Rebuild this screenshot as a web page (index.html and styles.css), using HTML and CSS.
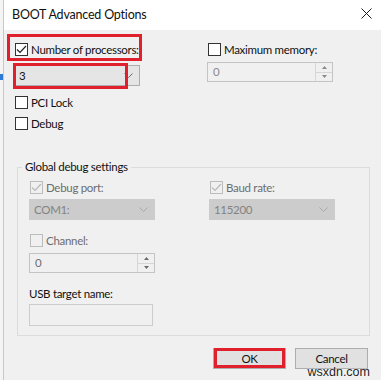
FILE: index.html
```html
<!DOCTYPE html>
<html lang="en">
<head>
    <meta charset="UTF-8">
    <meta name="viewport" content="width=device-width, initial-scale=1.0">
    <title>BOOT Advanced Options</title>
    <link rel="stylesheet" href="styles.css">
</head>
<body>
    <div class="backdrop"><span class="backdrop-icon"></span></div>

    <div class="dialog">
        <div class="titlebar">
            <span class="title">BOOT Advanced Options</span>
            <svg class="close" width="11" height="11" viewBox="0 0 11 11">
                <path d="M0.5 0.5 L10.5 10.5 M10.5 0.5 L0.5 10.5" stroke="#1a1a1a" stroke-width="1" fill="none"/>
            </svg>
        </div>

        <div class="content">
            <div class="top">
                <div class="col">
                    <label class="check marked mark-label">
                        <span class="box">
                            <svg width="11" height="11" viewBox="0 0 11 11"><path d="M1 5.5 L4 8.5 L10 2" stroke="#222" stroke-width="1.2" fill="none"/></svg>
                        </span>
                        Number of processors:
                    </label>
                    <div class="combo enabled marked mark-combo">
                        <span>3</span>
                        <svg class="chevron" width="9" height="5" viewBox="0 0 9 5"><path d="M0.5 0.5 L4.5 4.5 L8.5 0.5" stroke="#6a6a6a" fill="none"/></svg>
                    </div>
                    <label class="check row-pci"><span class="box"></span>PCI Lock</label>
                    <label class="check row-debug"><span class="box"></span>Debug</label>
                </div>
                <div class="col">
                    <label class="check"><span class="box"></span>Maximum memory:</label>
                    <div class="spin disabled spin-mem">
                        <span>0</span>
                        <div class="arrows">
                            <span class="arrow"><svg width="5" height="3" viewBox="0 0 5 3"><path d="M0 3 L2.5 0 L5 3 Z" fill="#8a8a8a"/></svg></span>
                            <span class="arrow"><svg width="5" height="3" viewBox="0 0 5 3"><path d="M0 0 L2.5 3 L5 0 Z" fill="#8a8a8a"/></svg></span>
                        </div>
                    </div>
                </div>
            </div>

            <fieldset class="group">
                <legend>Global debug settings</legend>
                <div class="group-grid">
                    <div class="col">
                        <label class="check off">
                            <span class="box">
                                <svg width="11" height="11" viewBox="0 0 11 11"><path d="M1 5.5 L4 8.5 L10 2" stroke="#b8b8b8" stroke-width="1.2" fill="none"/></svg>
                            </span>
                            Debug port:
                        </label>
                        <div class="combo disabled">
                            <span>COM1:</span>
                            <svg class="chevron" width="9" height="5" viewBox="0 0 9 5"><path d="M0.5 0.5 L4.5 4.5 L8.5 0.5" stroke="#a8a8a8" fill="none"/></svg>
                        </div>
                        <label class="check off row-channel"><span class="box"></span>Channel:</label>
                        <div class="spin disabled spin-channel">
                            <span>0</span>
                            <div class="arrows">
                                <span class="arrow"><svg width="5" height="3" viewBox="0 0 5 3"><path d="M0 3 L2.5 0 L5 3 Z" fill="#6a6a6a"/></svg></span>
                                <span class="arrow"><svg width="5" height="3" viewBox="0 0 5 3"><path d="M0 0 L2.5 3 L5 0 Z" fill="#6a6a6a"/></svg></span>
                            </div>
                        </div>
                        <div class="field-label">USB target name:</div>
                        <div class="textbox"></div>
                    </div>
                    <div class="col">
                        <label class="check off">
                            <span class="box">
                                <svg width="11" height="11" viewBox="0 0 11 11"><path d="M1 5.5 L4 8.5 L10 2" stroke="#b8b8b8" stroke-width="1.2" fill="none"/></svg>
                            </span>
                            Baud rate:
                        </label>
                        <div class="combo disabled wide">
                            <span>115200</span>
                            <svg class="chevron" width="9" height="5" viewBox="0 0 9 5"><path d="M0.5 0.5 L4.5 4.5 L8.5 0.5" stroke="#a8a8a8" fill="none"/></svg>
                        </div>
                    </div>
                </div>
            </fieldset>

            <div class="buttons">
                <button class="button marked mark-button">OK</button>
                <button class="button">Cancel</button>
            </div>
        </div>
    </div>

    <div class="watermark">wsxdn.com</div>
</body>
</html>
```

FILE: styles.css
```css
body {
    margin: 0;
    width: 381px;
    height: 380px;
    overflow: hidden;
    display: flex;
    position: relative;
    font-family: Lato, "Noto Sans", sans-serif;
    font-size: 11.5px;
    letter-spacing: -0.3px;
    color: #111;
    background: #f0f0f0;
}

.backdrop {
    width: 3px;
    background: #f4f4f4;
    border-right: 1px solid #c8c8c8;
    display: flex;
    flex-direction: column;
}

.backdrop-icon {
    display: block;
    margin-top: 74px;
    width: 3px;
    height: 6px;
    background: #2b7bd6;
}

.dialog {
    flex: 1;
    display: flex;
    flex-direction: column;
    background: #f0f0f0;
}

.titlebar {
    height: 30px;
    background: #fff;
    display: flex;
    align-items: center;
    justify-content: space-between;
    padding: 0 9px 0 8px;
}

.title {
    font-size: 12.5px;
    letter-spacing: -0.2px;
    margin-top: -2px;
}

.close {
    margin-top: -3px;
}

.content {
    flex: 1;
    display: flex;
    flex-direction: column;
}

.top {
    display: grid;
    grid-template-columns: 193px 1fr;
    padding-left: 10px;
    padding-top: 13px;
}

.col {
    display: flex;
    flex-direction: column;
    align-items: flex-start;
}

.check {
    display: flex;
    align-items: center;
    height: 13px;
    line-height: 13px;
    white-space: nowrap;
    margin-left: 1px;
}

.box {
    width: 11px;
    height: 11px;
    border: 1px solid #333;
    background: #fff;
    margin-right: 3px;
    display: flex;
}

.check.off {
    color: #6d6d6d;
}

.check.off .box {
    border-color: #bcbcbc;
    background: #f0f0f0;
}

.row-pci {
    margin-top: 10px;
}

.row-debug {
    margin-top: 8px;
}

.combo {
    box-sizing: border-box;
    width: 126px;
    height: 21px;
    margin-top: 9px;
    display: flex;
    align-items: center;
    justify-content: space-between;
    padding: 0 6px 0 4px;
    border: 1px solid #adadad;
}

.combo.enabled {
    background: #e5e5e5;
}

.combo.disabled {
    background: #cccccc;
    border-color: #cccccc;
    color: #838383;
    margin-top: 5px;
}

.combo.wide {
    width: 126px;
}

.spin {
    box-sizing: border-box;
    width: 126px;
    height: 20px;
    display: flex;
    align-items: stretch;
    border: 1px solid #c4c4c4;
    background: #f0f0f0;
    color: #8a8a8a;
}

.spin > span {
    flex: 1;
    padding-left: 5px;
    line-height: 18px;
}

.spin-mem {
    margin-top: 6px;
}

.spin-channel {
    margin-top: 6px;
    color: #6d6d6d;
}

.arrows {
    width: 16px;
    display: flex;
    flex-direction: column;
    border-left: 1px solid #d6d6d6;
}

.arrow {
    flex: 1;
    display: flex;
    align-items: center;
    justify-content: center;
}

.arrow + .arrow {
    border-top: 1px solid #d6d6d6;
}

.group {
    margin: 30px 11px 0 13px;
    padding: 0 11px 9px;
    border: 1px solid #dcdcdc;
    min-width: 0;
}

.group legend {
    padding: 0 3px;
    margin-left: -7px;
    line-height: 14px;
}

.group-grid {
    display: grid;
    grid-template-columns: 180px 1fr;
    padding-top: 7px;
}

.row-channel {
    margin-top: 14px;
}

.field-label {
    margin-top: 14px;
    line-height: 13px;
}

.textbox {
    box-sizing: border-box;
    width: 124px;
    height: 22px;
    margin-top: 4px;
    border: 1px solid #cccccc;
    background: #f0f0f0;
}

.buttons {
    display: flex;
    justify-content: flex-end;
    gap: 9px;
    padding-right: 13px;
    margin-top: 12px;
}

.button {
    box-sizing: border-box;
    width: 73px;
    height: 21px;
    border: 1px solid #adadad;
    background: #e1e1e1;
    font-family: inherit;
    font-size: 11.5px;
    letter-spacing: inherit;
    color: #111;
    padding: 0;
}

.marked {
    position: relative;
}

.marked::after {
    content: "";
    position: absolute;
    border: 3px solid #e0202c;
}

.mark-label::after {
    left: -8px;
    top: -9px;
    right: -3px;
    bottom: -5px;
}

.mark-combo::after {
    left: -2px;
    top: -3px;
    right: 11px;
    bottom: -4px;
}

.mark-button::after {
    left: 0;
    top: -1px;
    right: 0;
    bottom: 0;
}

.watermark {
    position: absolute;
    right: 11px;
    bottom: 1px;
    font-family: "Liberation Sans", Arial, sans-serif;
    font-size: 12.5px;
    line-height: 14px;
    letter-spacing: 0;
    color: #1e1e1e;
    text-shadow: 0 0 2px #fff;
}
```
